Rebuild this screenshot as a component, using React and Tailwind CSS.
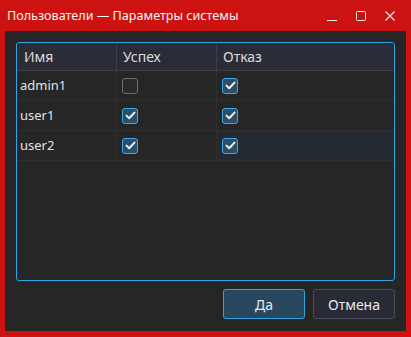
import React from 'react';

const font = { fontFamily: '"Noto Sans", "DejaVu Sans", sans-serif' };

const users = [
  { name: 'admin1', ok: false, fail: true },
  { name: 'user1', ok: true, fail: true },
  { name: 'user2', ok: true, fail: true, current: true },
];

const Check = ({ checked }) =>
  checked ? (
    <div className="w-[16px] h-[16px] rounded-[3px] border border-[#3aa9e4] bg-[#2a4f6b] flex items-center justify-center">
      <svg width="11" height="9" viewBox="0 0 11 9" fill="none">
        <path d="M1.5 4.6 L4.2 7.2 L9.5 1.6" stroke="#f2f2f2" strokeWidth="2" strokeLinecap="round" strokeLinejoin="round" />
      </svg>
    </div>
  ) : (
    <div className="w-[16px] h-[16px] rounded-[3px] border border-[#6e6e6e] bg-[#2a2a2a]"></div>
  );

export default function App() {
  return (
    <div className="w-[411px] h-[337px] bg-[#cd1212] flex flex-col overflow-hidden" style={font}>
      {/* title bar */}
      <div className="h-[31px] flex items-center pl-[7px] pr-[16px] shrink-0">
        <span className="text-[12.6px] text-[#f4f4f4] leading-none pt-[1px]">Пользователи — Параметры системы</span>
        <div className="ml-auto flex items-center gap-[19px]">
          <svg width="10" height="10" viewBox="0 0 10 10"><path d="M0 9.5 H10" stroke="#f0f0f0" strokeWidth="1" /></svg>
          <svg width="10" height="10" viewBox="0 0 10 10"><rect x="0.5" y="0.5" width="9" height="9" rx="1" fill="none" stroke="#f0f0f0" strokeWidth="1" /></svg>
          <svg width="10" height="10" viewBox="0 0 10 10"><path d="M0.5 0.5 L9.5 9.5 M9.5 0.5 L0.5 9.5" stroke="#f0f0f0" strokeWidth="1.1" /></svg>
        </div>
      </div>

      {/* body */}
      <div className="mx-[5px] h-[300px] bg-[#262626] flex flex-col pt-[11px] px-[11px] pb-[12px]">
        <div className="h-[239px] border border-[#2ea6e6] rounded-[3px] flex flex-col overflow-hidden text-[13px]">
          <div className="h-[28px] bg-[#2a2c38] border-b border-[#3c3e4a] flex text-[14px] text-[#dcdcdc]">
            <div className="w-[100px] border-r border-[#3c3e4a] flex items-center pl-[7px]">Имя</div>
            <div className="w-[100px] border-r border-[#3c3e4a] flex items-center pl-[6px]">Успех</div>
            <div className="flex-1 flex items-center pl-[6px]">Отказ</div>
          </div>
          {users.map((u) => (
            <div key={u.name} className="h-[30px] flex border-b border-[#2f2f2f] text-[#e2e2e2]">
              <div className="w-[100px] border-r border-[#2f2f2f] flex items-center pl-[3px]">{u.name}</div>
              <div className="w-[100px] border-r border-[#2f2f2f] flex items-center pl-[5px]">
                <Check checked={u.ok} />
              </div>
              <div className={`flex-1 flex items-center pl-[5px] ${u.current ? 'bg-[#232a31]' : ''}`}>
                <Check checked={u.fail} />
              </div>
            </div>
          ))}
        </div>

        <div className="mt-[8px] flex justify-end gap-[8px] text-[14px]">
          <button className="w-[82px] h-[30px] rounded-[3px] border border-[#2ea6e6] bg-[#2a4760] text-[#e8e8e8]">Да</button>
          <button className="w-[82px] h-[30px] rounded-[3px] border border-[#4a4c58] bg-[#282a36] text-[#e8e8e8]">Отмена</button>
        </div>
      </div>
    </div>
  );
}
